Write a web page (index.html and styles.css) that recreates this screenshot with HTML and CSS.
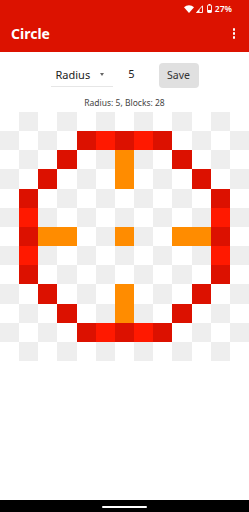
FILE: index.html
```html
<!DOCTYPE html>
<html lang="en">
  <head>
    <meta charset="UTF-8" />
    <meta name="viewport" content="width=device-width, initial-scale=1.0" />
    <title>Circle</title>
    <link rel="stylesheet" href="styles.css">
  </head>
  <body>
    <div class="app-bar">
      <div class="status-bar">
        <svg class="icon-wifi" width="10" height="8" viewBox="0 0 10 8">
          <path d="M0 2.2 A7.5 7.5 0 0 1 10 2.2 L5 8 Z" fill="#fff" />
        </svg>
        <svg class="icon-signal" width="7" height="8" viewBox="0 0 7 8">
          <path d="M0.5 7.5 L6.5 0.8 L6.5 7.5 Z" fill="none" stroke="#fff" stroke-width="0.9" />
          <path d="M0.5 7.5 L3.5 4.2 L3.5 7.5 Z" fill="#fff" />
        </svg>
        <svg class="icon-battery" width="5" height="9" viewBox="0 0 5 9">
          <rect x="1.5" y="0" width="2" height="1" fill="#fff" />
          <rect x="0.5" y="1.2" width="4" height="7.3" rx="0.5" fill="none" stroke="#fff" stroke-width="0.9" />
          <rect x="1" y="6" width="3" height="2.3" fill="#fff" />
        </svg>
        <span class="battery-text">27%</span>
      </div>
      <div class="toolbar">
        <h1>Circle</h1>
        <div class="overflow">
          <span></span><span></span><span></span>
        </div>
      </div>
    </div>

    <div class="controls">
      <div class="dropdown">
        <span>Radius</span>
        <span class="caret"></span>
      </div>
      <div class="radius-value">5</div>
      <button class="save-btn">Save</button>
    </div>

    <p class="summary">Radius: 5, Blocks: 28</p>

    <div id="grid" class="grid"></div>

    <div class="nav-bar"><span class="home-pill"></span></div>

    <script>
      // R = circle block, O = centre marker
      const rows = [
        ".............",
        "....RRRRR....",
        "...R..O..R...",
        "..R...O...R..",
        ".R.........R.",
        ".R.........R.",
        ".ROO..O..OOR.",
        ".R.........R.",
        ".R.........R.",
        "..R...O...R..",
        "...R..O..R...",
        "....RRRRR....",
        ".............",
      ];

      const grid = document.getElementById("grid");
      rows.forEach((row, r) => {
        row.split("").forEach((ch, c) => {
          const cell = document.createElement("div");
          cell.className = "cell";
          if ((r + c) % 2 === 1) cell.classList.add("shade");
          if (ch === "R") cell.classList.add("block");
          if (ch === "O") cell.classList.add("marker");
          grid.appendChild(cell);
        });
      });
    </script>
  </body>
</html>
```

FILE: styles.css
```css
body {
  margin: 0;
  font-family: "Noto Sans", "Open Sans", sans-serif;
  background-color: #fff;
  color: #222;
  height: 512px;
  position: relative;
  overflow: hidden;
}
.app-bar {
  background-color: #dc1200;
  color: white;
  height: 52px;
}
.status-bar {
  height: 17px;
  display: flex;
  align-items: center;
  justify-content: flex-end;
  padding-right: 17px;
  gap: 2px;
}
.icon-signal {
  margin-right: 2px;
}
.battery-text {
  font-size: 8.5px;
  font-weight: 600;
  margin-left: 1px;
}
.toolbar {
  height: 35px;
  display: flex;
  align-items: center;
  justify-content: space-between;
  padding: 0 14px 0 11px;
}
.toolbar h1 {
  margin: 0;
  font-size: 14px;
  font-weight: 700;
  padding-bottom: 2px;
}
.overflow {
  display: flex;
  flex-direction: column;
  gap: 1.5px;
  padding-bottom: 2px;
}
.overflow span {
  width: 2.5px;
  height: 2.5px;
  border-radius: 50%;
  background-color: white;
}
.controls {
  display: flex;
  align-items: center;
  justify-content: center;
  height: 28px;
  margin-top: 9px;
}
.dropdown {
  width: 62px;
  height: 24px;
  display: flex;
  align-items: center;
  justify-content: space-between;
  border-bottom: 1px solid #e6e6e6;
  padding: 0 6px 0 5px;
  font-size: 11px;
  color: #222;
  box-sizing: border-box;
}
.caret {
  width: 0;
  height: 0;
  border-left: 2.5px solid transparent;
  border-right: 2.5px solid transparent;
  border-top: 3px solid #666;
  margin-right: 3px;
}
.radius-value {
  width: 46px;
  text-align: center;
  font-size: 11px;
  padding-bottom: 3px;
  padding-right: 8px;
  box-sizing: border-box;
}
.save-btn {
  width: 40px;
  height: 25px;
  border: none;
  border-radius: 4px;
  background-color: #e0e0e0;
  font-family: inherit;
  font-size: 10.5px;
  color: #333;
  padding: 0;
}
.summary {
  margin: 6px 0 0;
  text-align: center;
  font-size: 8.5px;
  color: #444;
  height: 15px;
  line-height: 15px;
}
.grid {
  display: grid;
  grid-template-columns: repeat(13, 1fr);
  margin-top: 2px;
}
.cell {
  aspect-ratio: 1;
  background-color: #fff;
}
.cell.shade {
  background-color: #eeeeee;
}
.cell.block {
  background-color: #ff1900;
}
.cell.shade.block {
  background-color: #dc1100;
}
.cell.marker {
  background-color: #ff8c00;
}
.nav-bar {
  position: absolute;
  left: 0;
  right: 0;
  bottom: 0;
  height: 12px;
  background-color: #000;
  display: flex;
  align-items: center;
  justify-content: center;
}
.home-pill {
  width: 45px;
  height: 2px;
  border-radius: 1px;
  background-color: #fff;
  margin-top: 2px;
}
```
